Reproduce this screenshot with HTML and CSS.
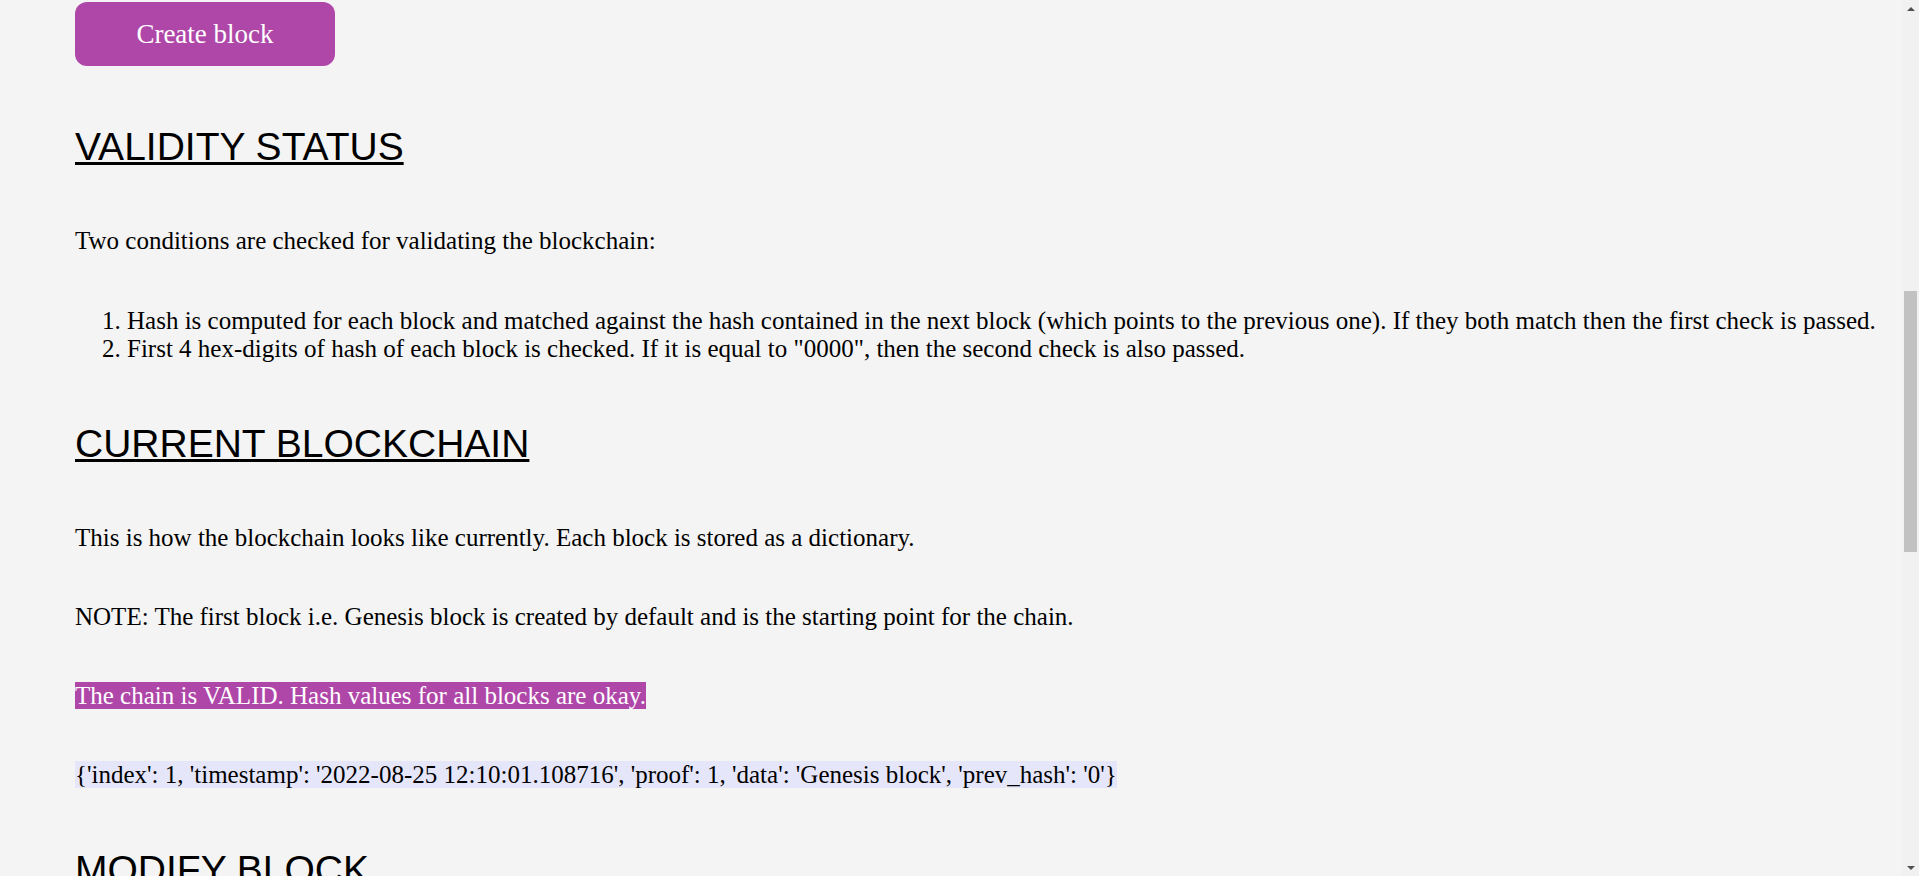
FILE: index.html
```html
<!DOCTYPE html>
<html lang="en">
<head>
<meta charset="utf-8">
<title>Simple Blockchain</title>
<link rel="stylesheet" href="styles.css">
</head>
<body>
<main class="page">
  <section class="section">
    <h1 class="title">SIMPLE BLOCKCHAIN</h1>
    <p class="text">A small demonstration of how a blockchain is built, validated and tampered with.</p>
    <h2 class="heading">CREATE BLOCK</h2>
    <p class="text">Enter the data to be stored in the new block and press the button below.</p>
    <form class="form" action="#">
      <label class="label" for="data">Data:</label>
      <input class="input" id="data" type="text" name="data">
      <button class="btn" type="button" id="create">Create block</button>
    </form>
  </section>

  <section class="section">
    <h2 class="heading">VALIDITY STATUS</h2>
    <p class="text">Two conditions are checked for validating the blockchain:</p>
    <ol class="list">
      <li>Hash is computed for each block and matched against the hash contained in the next block (which points to the previous one). If they both match then the first check is passed.</li>
      <li>First 4 hex-digits of hash of each block is checked. If it is equal to "0000", then the second check is also passed.</li>
    </ol>
  </section>

  <section class="section">
    <h2 class="heading">CURRENT BLOCKCHAIN</h2>
    <p class="text">This is how the blockchain looks like currently. Each block is stored as a dictionary.</p>
    <p class="text">NOTE: The first block i.e. Genesis block is created by default and is the starting point for the chain.</p>
    <p class="text"><span class="status">The chain is VALID. Hash values for all blocks are okay.</span></p>
    <p class="text"><span class="block">{'index': 1, 'timestamp': '2022-08-25 12:10:01.108716', 'proof': 1, 'data': 'Genesis block', 'prev_hash': '0'}</span></p>
  </section>

  <section class="section section-last">
    <h2 class="heading">MODIFY BLOCK</h2>
    <p class="text">Change the data of any block to see how it breaks the validity of the chain.</p>
    <form class="form" action="#">
      <label class="label" for="index">Block index:</label>
      <input class="input" id="index" type="text" name="index">
      <label class="label" for="newdata">New data:</label>
      <input class="input" id="newdata" type="text" name="newdata">
      <button class="btn" type="button">Modify block</button>
    </form>
  </section>
</main>
<div class="scrollbar" aria-hidden="true">
  <div class="scroll-arrow scroll-arrow-up"></div>
  <div class="scroll-track"><div class="scroll-thumb"></div></div>
  <div class="scroll-arrow scroll-arrow-down"></div>
</div>
<script src="script.js"></script>
</body>
</html>
```

FILE: styles.css
```css
html {
  background: #f4f4f4;
}

body {
  margin: 0;
  min-height: 2826px;
  background: #f4f4f4;
  color: #000;
  font-family: "Liberation Serif", "Times New Roman", serif;
  font-size: 25px;
}

.page {
  padding: 0 17px 0 75px;
}

.section {
  display: block;
}

.title {
  margin: 40px 0;
  font-family: "Liberation Sans", Arial, sans-serif;
  font-size: 48px;
  font-weight: normal;
}

.heading {
  margin: 59px 0 58px;
  font-family: "Liberation Sans", Arial, sans-serif;
  font-size: 39px;
  font-weight: normal;
  text-decoration: underline;
}

.text {
  margin: 51px 0;
}

.list {
  margin: 52px 0;
  padding-left: 52px;
}

.status {
  background: #af47a9;
  color: #fff;
}

.block {
  background: #e6e6fa;
}

.form {
  display: flex;
  flex-direction: column;
  align-items: flex-start;
  gap: 16px;
}

.label {
  font-size: 25px;
}

.input {
  width: 400px;
  height: 36px;
  font-size: 20px;
  font-family: inherit;
  border: 1px solid #999;
  margin-bottom: 24px;
}

.btn {
  display: block;
  width: 260px;
  height: 64px;
  margin: 0;
  padding: 0;
  border: none;
  border-radius: 12px;
  background: #af47a9;
  color: #fff;
  font-family: "Liberation Serif", "Times New Roman", serif;
  font-size: 27px;
  cursor: pointer;
}

/* window scrollbar */
.scrollbar {
  position: fixed;
  top: 0;
  right: 0;
  bottom: 0;
  width: 17px;
  display: flex;
  flex-direction: column;
  background: #f1f1f1;
}

.scroll-arrow {
  height: 17px;
  flex: none;
  display: flex;
  justify-content: center;
  align-items: center;
}

.scroll-arrow::before {
  content: "";
  width: 0;
  height: 0;
  border-left: 4px solid transparent;
  border-right: 4px solid transparent;
}

.scroll-arrow-up::before {
  border-bottom: 4px solid #505050;
}

.scroll-arrow-down::before {
  border-top: 4px solid #505050;
}

.scroll-track {
  flex: 1;
  padding: 0 2px;
}

.scroll-thumb {
  margin-top: 274px;
  height: 261px;
  background: #c1c1c1;
}
```

FILE: script.js
```js
var createButton = document.getElementById('create');
window.scrollTo(0, createButton.getBoundingClientRect().top + window.scrollY - 2);
```
